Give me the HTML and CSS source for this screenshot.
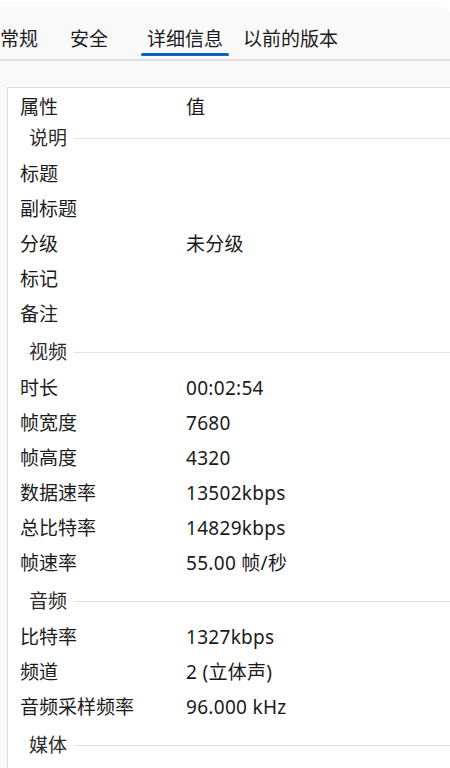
FILE: index.html
```html
<!DOCTYPE html>
<html lang="zh-CN">
<head>
	<meta charset="utf-8">
	<meta name="viewport" content="width=device-width, initial-scale=1">
	<title>属性 - 详细信息</title>
	<link rel="stylesheet" href="styles.css">
</head>
<body>
	<div class="window">
		<div class="tabs">
			<span class="tab tab-first">常规</span>
			<span class="tab">安全</span>
			<span class="tab active">详细信息</span>
			<span class="tab tab-last">以前的版本</span>
		</div>

		<div class="list">
			<div class="head">
				<span class="name">属性</span>
				<span class="value">值</span>
			</div>

			<div class="group"><span>说明</span></div>
			<div class="row"><span class="name">标题</span><span class="value"></span></div>
			<div class="row"><span class="name">副标题</span><span class="value"></span></div>
			<div class="row"><span class="name">分级</span><span class="value">未分级</span></div>
			<div class="row"><span class="name">标记</span><span class="value"></span></div>
			<div class="row"><span class="name">备注</span><span class="value"></span></div>

			<div class="group"><span>视频</span></div>
			<div class="row"><span class="name">时长</span><span class="value">00:02:54</span></div>
			<div class="row"><span class="name">帧宽度</span><span class="value">7680</span></div>
			<div class="row"><span class="name">帧高度</span><span class="value">4320</span></div>
			<div class="row"><span class="name">数据速率</span><span class="value">13502kbps</span></div>
			<div class="row"><span class="name">总比特率</span><span class="value">14829kbps</span></div>
			<div class="row"><span class="name">帧速率</span><span class="value">55.00 帧/秒</span></div>

			<div class="group"><span>音频</span></div>
			<div class="row"><span class="name">比特率</span><span class="value">1327kbps</span></div>
			<div class="row"><span class="name">频道</span><span class="value">2 (立体声)</span></div>
			<div class="row"><span class="name">音频采样频率</span><span class="value">96.000 kHz</span></div>

			<div class="group"><span>媒体</span></div>
		</div>
	</div>
</body>
</html>
```

FILE: styles.css
```css
body{
	margin: 0;
	background: #ffffff;
	font-family: "Noto Sans", "Noto Sans CJK SC", sans-serif;
	font-size: 19px;
	color: #1b1b1b;
	overflow: hidden;
}
.window{
	margin-top: 7px;
	height: 761px;
	background: #f9f9f9;
	border-top-right-radius: 8px;
	overflow: hidden;
}
.tabs{
	display: flex;
	height: 52px;
	border-bottom: 2px solid #dddddd;
	white-space: nowrap;
}
.tab{
	position: relative;
	padding: 12px 6px 0;
	line-height: 41px;
	height: 40px;
	margin-left: 20px;
}
.tab-first{
	margin-left: -6px;
}
.active{
	margin-left: 27px;
}
.active::after{
	content: "";
	position: absolute;
	left: 0;
	right: 0;
	bottom: 3px;
	height: 3px;
	border-radius: 2px;
	background: #0067c0;
}
.tab-last{
	margin-left: 8px;
}
.list{
	margin: 26px 0 0 7px;
	padding-top: 1px;
	height: 700px;
	background: #ffffff;
	border-top: 1px solid #dcdcdc;
	border-left: 1px solid #dcdcdc;
}
.head, .row{
	display: flex;
	padding-left: 12px;
	white-space: nowrap;
}
.head{
	height: 29px;
	line-height: 37px;
}
.row{
	height: 35px;
	line-height: 35px;
}
.name{
	width: 166px;
	flex-shrink: 0;
}
.value{
	letter-spacing: 0.3px;
}
.group{
	display: flex;
	align-items: center;
	height: 39px;
	padding-left: 21px;
	color: #2b2b2b;
}
.group span{
	line-height: 39px;
	margin-top: 1px;
}
.group::after{
	content: "";
	flex: 1;
	height: 1px;
	margin-left: 7px;
	margin-top: 2px;
	background: #e3e3e3;
}
```
